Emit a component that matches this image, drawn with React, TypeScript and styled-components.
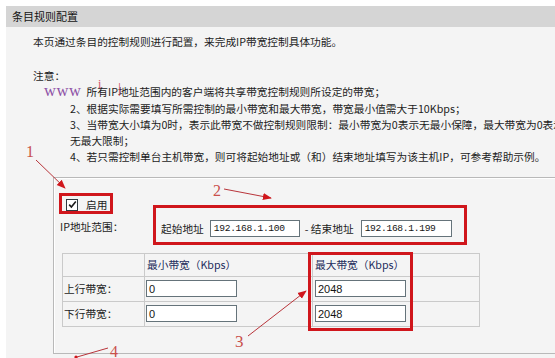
import React from "react";
import styled, { createGlobalStyle } from "styled-components";

const GlobalStyle = createGlobalStyle`
  html, body {
    margin: 0;
    padding: 0;
    background: #fff;
  }
  body {
    font-family: "Noto Sans CJK SC", "Noto Sans", sans-serif;
  }
`;

const Page = styled.div`
  position: relative;
  width: 555px;
  height: 358px;
  overflow: hidden;
  box-sizing: border-box;
  padding: 6px 0 0 6px;
  display: flex;
  flex-direction: column;
  background: #fff;
  color: #1c1c1c;
  font-size: 10.7px;
`;

const TitleBar = styled.div`
  height: 21px;
  line-height: 21px;
  padding-left: 6px;
  background: #d5d5d5;
  font-size: 11px;
  color: #141414;
  white-space: nowrap;
`;

const Panel = styled.div`
  flex: 1;
  background: #f4f4f4;
  padding: 7px 0 0 27px;
`;

const Intro = styled.div`
  line-height: 16px;
  white-space: nowrap;
`;

const Notice = styled.div`
  margin-top: 18px;
  line-height: 16.3px;
  white-space: nowrap;
`;

const NoteLine = styled.div`
  position: relative;
  padding-left: 37px;
`;

const Watermark = styled.span`
  position: absolute;
  left: 11px;
  top: -2px;
  font-family: "Liberation Serif", serif;
  font-size: 16.5px;
  line-height: 18px;
  letter-spacing: 0.6px;
  color: #8d52a6;
  background: #f4f4f4;
  padding-right: 1px;
`;

const WatermarkMark = styled.span<{ $left: number; $top: number; $size: number }>`
  position: absolute;
  left: ${(p) => p.$left}px;
  top: ${(p) => p.$top}px;
  font-family: "Liberation Serif", serif;
  font-size: ${(p) => p.$size}px;
  line-height: 1;
  color: #d0506a;
`;

const Frame = styled.div`
  margin: 11px 0 0 20px;
  width: 620px;
  height: 177px;
  box-sizing: border-box;
  border: 1px solid #b9b9b9;
  border-right: none;
  box-shadow: inset 1px 1px 0 #fff;
  padding: 15px 0 0 5px;
`;

const RangeGrid = styled.div`
  display: grid;
  grid-template-columns: 94px auto;
  grid-template-rows: 21px 26px;
  justify-content: start;
`;

const RedBox = styled.div`
  box-sizing: border-box;
  border: 3px solid #d0161c;
`;

const EnableBox = styled(RedBox)`
  grid-column: 1;
  grid-row: 1;
  width: 54px;
  height: 21px;
  display: flex;
  align-items: center;
  gap: 8px;
  padding: 3px 0 0 4px;
`;

const CheckBox = styled.span`
  width: 12px;
  height: 12px;
  box-sizing: border-box;
  border: 1px solid #2f3a40;
  background: #fff;
  display: flex;
  align-items: center;
  justify-content: center;
`;

const FieldLabel = styled.span`
  grid-column: 1;
  grid-row: 2;
  align-self: center;
  padding-left: 1px;
  white-space: nowrap;
`;

const AddressBox = styled(RedBox)`
  grid-column: 2;
  grid-row: 1 / 3;
  align-self: end;
  margin-bottom: -5px;
  width: 314px;
  height: 40px;
  display: flex;
  align-items: center;
  padding: 7px 0 0 5px;
  white-space: nowrap;
`;

const Input = styled.div<{ $w: number; $mono?: boolean }>`
  width: ${(p) => p.$w}px;
  height: 17px;
  box-sizing: border-box;
  border: 1px solid #65737a;
  background: #fff;
  padding-left: ${(p) => (p.$mono ? 3 : 2)}px;
  display: flex;
  align-items: center;
  font-family: ${(p) => (p.$mono ? '"Liberation Mono", monospace' : '"Liberation Sans", sans-serif')};
  font-size: ${(p) => (p.$mono ? 9.6 : 11)}px;
  letter-spacing: ${(p) => (p.$mono ? -0.3 : 0)}px;
  color: #141414;
`;

const Spaced = styled.span<{ $l?: number; $r?: number }>`
  margin-left: ${(p) => p.$l ?? 0}px;
  margin-right: ${(p) => p.$r ?? 0}px;
`;

const TableWrap = styled.div`
  position: relative;
  margin: 13px 0 0 3px;
  width: 418px;
`;

const Table = styled.div`
  display: grid;
  grid-template-columns: 81px 167px 166px;
  grid-template-rows: 22px 24px 24px;
  gap: 1px;
  padding: 1px;
  background: #cacaca;
`;

const Cell = styled.div<{ $head?: boolean; $pad: number }>`
  background: #f4f4f4;
  display: flex;
  align-items: center;
  padding-left: ${(p) => p.$pad}px;
  white-space: nowrap;
  color: ${(p) => (p.$head ? "#1c2c5c" : "#1c1c1c")};
`;

const ColumnMark = styled(RedBox)`
  position: absolute;
  left: 246px;
  top: -1px;
  width: 105px;
  height: 79px;
`;

const Overlay = styled.svg`
  position: absolute;
  left: 0;
  top: 0;
  pointer-events: none;
`;

const Callout = styled.span<{ $x: number; $y: number; $size: number }>`
  position: absolute;
  left: ${(p) => p.$x}px;
  top: ${(p) => p.$y}px;
  font-family: "Liberation Serif", serif;
  font-size: ${(p) => p.$size}px;
  line-height: 1;
  color: #c9504a;
`;

const notes = [
  "2、根据实际需要填写所需控制的最小带宽和最大带宽，带宽最小值需大于10Kbps；",
  "3、当带宽大小填为0时，表示此带宽不做控制规则限制：最小带宽为0表示无最小保障，最大带宽为0表示",
  "无最大限制；",
  "4、若只需控制单台主机带宽，则可将起始地址或（和）结束地址填写为该主机IP，可参考帮助示例。",
];

const rows = [
  { label: "上行带宽：", min: "0", max: "2048" },
  { label: "下行带宽：", min: "0", max: "2048" },
];

export default function App() {
  return (
    <>
      <GlobalStyle />
      <Page>
        <TitleBar>条目规则配置</TitleBar>
        <Panel>
          <Intro>本页通过条目的控制规则进行配置，来完成IP带宽控制具体功能。</Intro>
          <Notice>
            <div>注意：</div>
            <NoteLine>
              1、所有IP地址范围内的客户端将共享带宽控制规则所设定的带宽；
              <Watermark>www</Watermark>
              <WatermarkMark $left={65} $top={-6} $size={12}>i</WatermarkMark>
              <WatermarkMark $left={85} $top={-3} $size={15}>|</WatermarkMark>
            </NoteLine>
            {notes.map((n) => (
              <NoteLine key={n}>{n}</NoteLine>
            ))}
          </Notice>
          <Frame>
            <RangeGrid>
              <EnableBox>
                <CheckBox>
                  <svg width="9" height="9" viewBox="0 0 9 9">
                    <path d="M1.2 4.6 L3.4 7 L7.8 1.6" fill="none" stroke="#1b1b1b" strokeWidth="1.6" />
                  </svg>
                </CheckBox>
                <span>启用</span>
              </EnableBox>
              <FieldLabel>IP地址范围：</FieldLabel>
              <AddressBox>
                <Spaced $r={6}>起始地址</Spaced>
                <Input $w={90} $mono>192.168.1.100</Input>
                <Spaced $l={5} $r={7}>-&nbsp;结束地址</Spaced>
                <Input $w={91} $mono>192.168.1.199</Input>
              </AddressBox>
            </RangeGrid>
            <TableWrap>
              <Table>
                <Cell $pad={1} />
                <Cell $head $pad={2}>最小带宽（Kbps）</Cell>
                <Cell $head $pad={2}>最大带宽（Kbps）</Cell>
                {rows.map((r) => (
                  <React.Fragment key={r.label}>
                    <Cell $pad={1}>{r.label}</Cell>
                    <Cell $pad={1}>
                      <Input $w={91}>{r.min}</Input>
                    </Cell>
                    <Cell $pad={2}>
                      <Input $w={91}>{r.max}</Input>
                    </Cell>
                  </React.Fragment>
                ))}
              </Table>
              <ColumnMark />
            </TableWrap>
          </Frame>
        </Panel>

        <Overlay width="555" height="358" viewBox="0 0 555 358">
          <defs>
            <marker id="head" viewBox="0 0 10 10" refX="9" refY="5" markerWidth="9" markerHeight="9" orient="auto" markerUnits="userSpaceOnUse">
              <path d="M0 1 L10 5 L0 9 Z" fill="#d0161c" />
            </marker>
          </defs>
          <g stroke="#b8343a" strokeWidth="1" fill="none">
            <line x1="36" y1="160" x2="65" y2="188" markerEnd="url(#head)" />
            <line x1="224" y1="189" x2="271" y2="198" markerEnd="url(#head)" />
            <line x1="248" y1="336" x2="306" y2="291" markerEnd="url(#head)" />
            <line x1="77" y1="357" x2="108" y2="348" />
          </g>
          <circle cx="76" cy="357" r="1.6" fill="#d0161c" />
        </Overlay>
        <Callout $x={26} $y={144} $size={16}>1</Callout>
        <Callout $x={213} $y={183} $size={16}>2</Callout>
        <Callout $x={235} $y={333} $size={17}>3</Callout>
        <Callout $x={110} $y={344} $size={16}>4</Callout>
      </Page>
    </>
  );
}
